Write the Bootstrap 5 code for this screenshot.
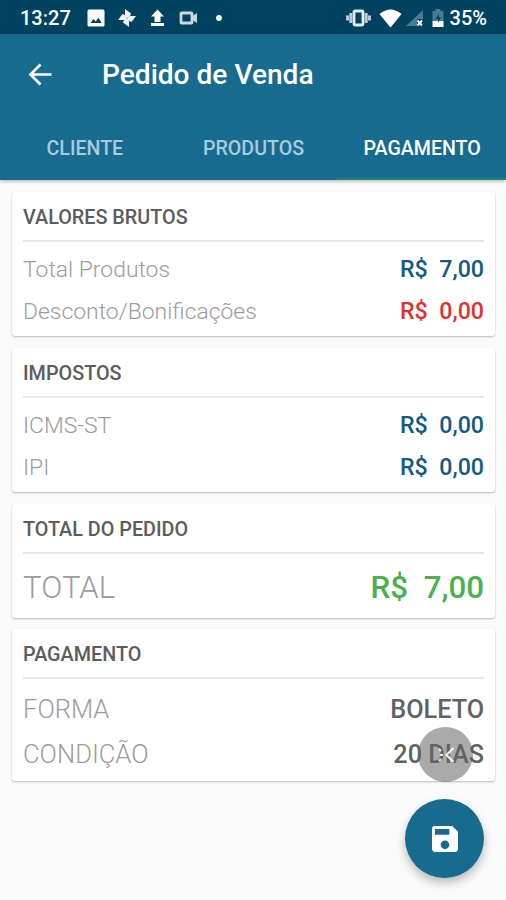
<!DOCTYPE html>
<html lang="pt-BR">
<head>
<meta charset="utf-8">
<meta name="viewport" content="width=device-width, initial-scale=1">
<title>Pedido de Venda</title>
<link href="https://cdn.jsdelivr.net/npm/bootstrap@5.3.0/dist/css/bootstrap.min.css" rel="stylesheet">
<style>
body{font-family:Roboto,"Liberation Sans",sans-serif;background:#fafafa;width:506px;height:900px;line-height:1}
svg{display:block;flex:none}
.statusbar{height:34px;padding:2px 19px 0 20px;background:#00425f;font-size:20px;font-weight:500}
.appbar{height:146px;background:#176b8e;box-shadow:0 1px 4px rgba(0,0,0,.3)}
.titlebar{height:81px;padding:1px 0 0 28px}
.apptitle{font-size:28.1px;font-weight:500;margin-left:49px;padding-top:1px}
.tabs{height:65px;font-size:19.6px;font-weight:500}
.tabs .nav-link{color:#a9cbdc;border-bottom:2px solid transparent;height:65px;padding:4px 0 0 1px}
.tabs .nav-link.active{color:#fff;border-bottom-color:#168479}
.cards{padding:12px 11px 0 12px}
.panel{border:0;border-radius:3px;box-shadow:0 1px 2px rgba(0,0,0,.26);padding:0 11px}
.panel-tall{height:144px;margin-bottom:12px}
.panel-total{height:114px;margin-bottom:11px}
.panel-pay{height:152px}
.panel h2{flex:none;font-size:19.8px;font-weight:500;color:#5c5c5c;height:50px;border-bottom:2px solid #e9e9e9;padding-top:4px;line-height:1}
.rows{padding-top:7px}
.line{height:42px;font-size:22.9px;font-weight:300;color:#9c9c9c}
.line .val{font-weight:500;color:#155a80;white-space:pre;font-size:23.2px}
.line .red{color:#e53030}
.total{height:68px;flex:none;font-size:31.2px}
.total .val{color:#4caf50;font-size:31.3px}
.rows-pay{padding-top:8px}
.pay{height:45px;font-size:25.600px}
.pay .val{color:#626262;font-size:25.2px}
.mini{width:55px;height:55px;right:33px;top:727px;background:rgba(100,100,100,.55)}
.fab{width:79px;height:79px;right:22px;top:799px;background:#176b8e;box-shadow:0 5px 10px rgba(0,0,0,.26)}
</style>
</head>
<body class="position-relative overflow-hidden">
<div class="statusbar d-flex align-items-center justify-content-between text-white">
  <div class="d-flex align-items-center">
    <span>13:27</span>
    <svg style="margin-left:16px" width="18" height="18" viewBox="0 0 18 18"><rect x=".5" y=".5" width="17" height="17" rx="1.500" fill="#fff"/><path d="M3.500 14 6.500 10l2.200 2.400 2.700-3.600 3.300 5.200z" fill="#00425f"/></svg>
    <svg style="margin-left:12px" width="20" height="20" viewBox="0 0 20 20" fill="#f2f6f8"><path d="M10 10 8 7V1l6 4.500-1 2.500z"/><path d="m10 10 3-2h6l-4.500 6-2.500-1z"/><path d="m10 10 2 3v6l-6-4.500L7 12z"/><path d="m10 10-3 2H1l4.500-6L8 7z"/></svg>
    <svg style="margin-left:13px" width="15" height="18" viewBox="0 0 15 18" fill="#fff"><path d="M7.500 .5 14 7.500h-3.500V13h-6V7.500H1zM1 14h13v3H1z"/></svg>
    <svg style="margin-left:14px" width="19" height="14" viewBox="0 0 19 14"><rect x="2" y="2" width="11" height="10" rx=".5" fill="none" stroke="#c9d8df" stroke-width="2.800"/><path d="M13.500 5 18 2v10l-4.500-3z" fill="#c9d8df"/></svg>
    <svg style="margin-left:18px" width="6" height="6"><circle cx="3" cy="3" r="2.900" fill="#fff"/></svg>
  </div>
  <div class="d-flex align-items-center">
    <svg width="25" height="18" viewBox="0 0 25 18"><path d="M1.500 6.500v5M4.800 4v10M20.200 4v10M23.500 6.500v5" stroke="#b9ccd5" stroke-width="3"/><rect x="8" y="2" width="9" height="14" rx="1" fill="none" stroke="#e4ecef" stroke-width="2.800"/></svg>
    <svg style="margin-left:8px" width="23" height="19" viewBox="0 0 23 19"><path d="M.5 5Q11.500-4 22.500 5L11.500 18.500z" fill="#fff"/></svg>
    <svg style="margin-left:4px" width="17" height="18" viewBox="0 0 17 18"><path d="M17 1v9h-6v7H0z" fill="#477b91"/><path d="m11.500 11.500 4.500 5m0-5-4.500 5" stroke="#fff" stroke-width="1.900"/></svg>
    <svg style="margin-left:9px" width="12" height="20" viewBox="0 0 12 20"><path d="M3.500 1h5v2H11.500v10H.5V3h3z" fill="#477b91"/><path d="M.5 13h11v6H.5z" fill="#fff"/><path d="M7 5 3.500 11H6v4l3-6H6.500z" fill="#00425f"/></svg>
    <span style="margin-left:6px">35%</span>
  </div>
</div>
<header class="appbar text-white position-relative">
  <div class="titlebar d-flex align-items-center">
    <svg width="25" height="24" viewBox="0 0 25 24" fill="none" stroke="#fff" stroke-width="2.700"><path d="M23.500 11.500H3M12.500 1.500 2.500 11.500l10 10"/></svg>
    <span class="apptitle">Pedido de Venda</span>
  </div>
  <nav class="tabs nav nav-fill flex-nowrap row g-0">
    <a class="nav-link col-4 d-flex align-items-center justify-content-center">CLIENTE</a>
    <a class="nav-link col-4 d-flex align-items-center justify-content-center">PRODUTOS</a>
    <a class="nav-link col-4 d-flex align-items-center justify-content-center active">PAGAMENTO</a>
  </nav>
</header>
<main class="cards d-flex flex-column">
  <section class="panel panel-tall card">
    <h2 class="d-flex align-items-center mb-0">VALORES BRUTOS</h2>
    <div class="rows">
      <div class="line d-flex align-items-center justify-content-between"><span>Total Produtos</span><span class="val">R$  7,00</span></div>
      <div class="line d-flex align-items-center justify-content-between"><span>Desconto/Bonificações</span><span class="val red">R$  0,00</span></div>
    </div>
  </section>
  <section class="panel panel-tall card">
    <h2 class="d-flex align-items-center mb-0">IMPOSTOS</h2>
    <div class="rows">
      <div class="line d-flex align-items-center justify-content-between"><span>ICMS-ST</span><span class="val">R$  0,00</span></div>
      <div class="line d-flex align-items-center justify-content-between"><span>IPI</span><span class="val">R$  0,00</span></div>
    </div>
  </section>
  <section class="panel panel-total card">
    <h2 class="d-flex align-items-center mb-0">TOTAL DO PEDIDO</h2>
    <div class="line total d-flex align-items-center justify-content-between"><span>TOTAL</span><span class="val">R$  7,00</span></div>
  </section>
  <section class="panel panel-pay card">
    <h2 class="d-flex align-items-center mb-0">PAGAMENTO</h2>
    <div class="rows-pay">
      <div class="line pay d-flex align-items-center justify-content-between"><span>FORMA</span><span class="val">BOLETO</span></div>
      <div class="line pay d-flex align-items-center justify-content-between"><span>CONDIÇÃO</span><span class="val">20 DIAS</span></div>
    </div>
  </section>
</main>
<div class="mini rounded-circle position-absolute d-flex align-items-center justify-content-center">
  <svg width="22" height="22" viewBox="0 0 22 22" fill="none" stroke="#fff" stroke-width="2.200" opacity=".85"><path d="m18.500 4-7 7 7 7M4 5l2 2M4 17l2-2M5 11h3"/></svg>
</div>
<div class="fab rounded-circle position-absolute d-flex align-items-center justify-content-center">
  <svg width="26" height="26" viewBox="3 3 18 18"><path fill="#fff" d="M17 3H5a2 2 0 0 0-2 2v14c0 1.100.9 2 2 2h14c1.100 0 2-.9 2-2V7zm-5 16a3 3 0 1 1 0-6 3 3 0 0 1 0 6zm3-10H5V5h10z"/></svg>
</div>
<script src="https://cdn.jsdelivr.net/npm/bootstrap@5.3.0/dist/js/bootstrap.bundle.min.js"></script>
</body>
</html>
